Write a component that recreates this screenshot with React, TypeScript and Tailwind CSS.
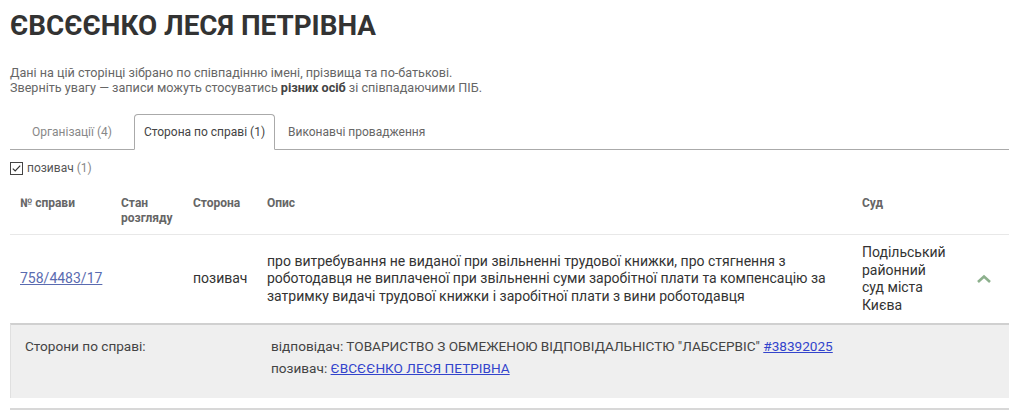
import React from "react";

export default function App() {
  return (
    <div className="w-[1019px] h-[411px] bg-white text-[#333] overflow-hidden" style={{ fontFamily: "Roboto, 'Noto Sans', sans-serif" }}>
      <div className="px-[10px]">
        <h1 className="pt-[9px] text-[27.8px] leading-[34px] font-bold text-[#333]">ЄВСЄЄНКО ЛЕСЯ ПЕТРІВНА</h1>
        <div className="mt-[22px] text-[12.6px] leading-[15px] text-[#666]">
          <p>Дані на цій сторінці зібрано по співпадінню імені, прізвища та по-батькові.</p>
          <p>
            Зверніть увагу — записи можуть стосуватись <b className="font-bold text-[#444]">різних осіб</b> зі співпадаючими ПІБ.
          </p>
        </div>

        <div className="mt-[19px] flex items-end border-b border-[#aaa] h-[36px]">
          <div className="w-[124px] h-[35px] flex items-center justify-center text-[12px] text-[#888]">Організації (4)</div>
          <div className="w-[141px] h-[36px] -mb-px flex items-center justify-center text-[12px] text-[#444] border border-[#aaa] border-b-white bg-white rounded-t-[4px]">
            Сторона по справі (1)
          </div>
          <div className="h-[35px] flex items-center pl-[13px] text-[12px] text-[#666]">Виконавчі провадження</div>
        </div>

        <div className="mt-[10px] flex items-center gap-[4px] text-[12px] text-[#555] h-[16px]">
          <svg width="13" height="13" viewBox="0 0 13 13">
            <rect x="0.5" y="0.5" width="12" height="12" fill="white" stroke="#444" />
            <path d="M2.8 6.6 L5.2 9 L10.2 3.6" fill="none" stroke="#333" strokeWidth="1.2" />
          </svg>
          <span>
            позивач <span className="text-[#888]">(1)</span>
          </span>
        </div>

        <table className="mt-[15px] w-[999px] table-fixed border-collapse">
          <colgroup>
            <col className="w-[101px]" />
            <col className="w-[72px]" />
            <col className="w-[74px]" />
            <col className="w-[595px]" />
            <col className="w-[100px]" />
            <col />
          </colgroup>
          <thead>
            <tr className="border-b border-[#e8e8e8] text-left text-[12px] leading-[15px] font-bold text-[#666] align-top">
              <th className="pl-[10px] pt-[5px] pb-[8px] font-bold">№ справи</th>
              <th className="pl-[10px] pt-[5px] pb-[8px] font-bold">Стан розгляду</th>
              <th className="pl-[10px] pt-[5px] pb-[8px] font-bold">Сторона</th>
              <th className="pl-[10px] pt-[5px] pb-[8px] font-bold">Опис</th>
              <th className="pl-[10px] pt-[5px] pb-[8px] font-bold">Суд</th>
              <th />
            </tr>
          </thead>
          <tbody>
            <tr className="align-middle text-[14px] leading-[17.5px] text-[#333]">
              <td className="pl-[10px] py-[9px]">
                <a href="#" className="text-[#5a6bb0] underline">758/4483/17</a>
              </td>
              <td className="pl-[10px]" />
              <td className="pl-[10px]">позивач</td>
              <td className="pl-[10px] pr-[10px]">
                про витребування не виданої при звільненні трудової книжки, про стягнення з роботодавця не виплаченої при звільненні суми заробітної плати та компенсацію за затримку видачі трудової книжки і заробітної плати з вини роботодавця
              </td>
              <td className="pl-[10px] pr-[8px] py-[9px]">Подільський районний суд міста Києва</td>
              <td>
                <div className="flex justify-center pl-[6px]">
                  <svg width="16" height="10" viewBox="0 0 16 10">
                    <path d="M2 8 L8 2.5 L14 8" fill="none" stroke="#8db08d" strokeWidth="2.6" />
                  </svg>
                </div>
              </td>
            </tr>
          </tbody>
        </table>

        <div className="bg-[#efefef] border-t-2 border-[#d0d0d0] border-l border-l-[#e0e0e0] h-[75px] flex text-[13.6px] leading-[22px] text-[#444]">
          <div className="w-[245px] pl-[14px] pt-[10px]">Сторони по справі:</div>
          <div className="pl-[15px] pt-[10px]">
            <div>
              відповідач: ТОВАРИСТВО З ОБМЕЖЕНОЮ ВІДПОВІДАЛЬНІСТЮ "ЛАБСЕРВІС"{" "}
              <a href="#" className="text-[#3344cc] underline">#38392025</a>
            </div>
            <div>
              позивач: <a href="#" className="text-[#3344cc] underline">ЄВСЄЄНКО ЛЕСЯ ПЕТРІВНА</a>
            </div>
          </div>
        </div>
        <div className="mt-[10px] border-t-2 border-[#d8d8d8]" />
      </div>
    </div>
  );
}
